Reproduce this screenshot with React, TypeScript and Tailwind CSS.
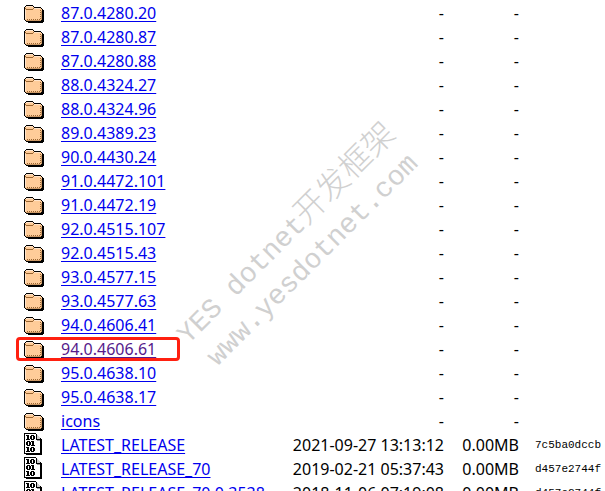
interface Entry {
  name: string
  kind: 'folder' | 'file'
  modified?: string
  size?: string
  etag?: string
  visited?: boolean
}

const folders = [
  '87.0.4280.20',
  '87.0.4280.87',
  '87.0.4280.88',
  '88.0.4324.27',
  '88.0.4324.96',
  '89.0.4389.23',
  '90.0.4430.24',
  '91.0.4472.101',
  '91.0.4472.19',
  '92.0.4515.107',
  '92.0.4515.43',
  '93.0.4577.15',
  '93.0.4577.63',
  '94.0.4606.41',
  '94.0.4606.61',
  '95.0.4638.10',
  '95.0.4638.17',
  'icons',
]

const entries: Entry[] = [
  ...folders.map((name): Entry => ({ name, kind: 'folder', visited: name === '94.0.4606.61' })),
  { name: 'LATEST_RELEASE', kind: 'file', modified: '2021-09-27 13:13:12', size: '0.00MB', etag: '7c5ba0dccb' },
  { name: 'LATEST_RELEASE_70', kind: 'file', modified: '2019-02-21 05:37:43', size: '0.00MB', etag: 'd457e2744f' },
  { name: 'LATEST_RELEASE_70.0.3538', kind: 'file', modified: '2018-11-06 07:19:08', size: '0.00MB', etag: 'd457e2744f' },
]

function FolderIcon() {
  return (
    <svg width="20" height="22" viewBox="0 0 20 22" shapeRendering="crispEdges" aria-hidden="true">
      <path fill="#000" d="M2 4h7v1h1v1h7v1h1v1h1v1h1v12h-1v1H4v-1H2v-1H1v-1H0V6h1V5h1z" />
      <path fill="#ffcc99" d="M2 5h7v1h1v1h7v1h1v11h-1v1H2v-1H1V6h1z" />
      <path fill="#ffe5cc" d="M2 5h7v1H2zM1 9h1v9H1zM10 7h6v1h-6z" />
      <path fill="#996633" d="M1 7h1v1H1zM2 8h7v1H2zM9 7h1v1H9z" />
      <path
        fill="#996633"
        d="M3 18h1v1H3zM5 18h1v1H5zM7 18h1v1H7zM9 18h1v1H9zM11 18h1v1h-1zM13 18h1v1h-1zM15 18h1v1h-1zM16 17h1v1h-1zM16 15h1v1h-1zM16 13h1v1h-1zM16 11h1v1h-1zM16 9h1v1h-1z"
      />
      <path fill="#cc9966" d="M2 19h15v1H2zM17 10h1v9h-1z" />
    </svg>
  )
}

const ZERO = 'M1 0h3v1h1v3h-1v1H1V4H0V1h1zM2 1v3h1V1z'
const ONE = 'M0 0h3v4h1v1H0V4h1V1H0z'

function BinaryIcon() {
  return (
    <svg width="20" height="22" viewBox="0 0 20 22" shapeRendering="crispEdges" aria-hidden="true">
      <path fill="#000" d="M0 0h12v1h1v1h1v1h1v1h1v1h1v1h1v16H2v-1H0z" />
      <path fill="#fff" d="M1 1h11v6h4v13H1z" />
      <path fill="#000" d="M12 1h1v6h-1zM12 6h5v1h-5z" />
      <path fill="#ccc" d="M13 2h1v1h1v1h1v2h-3z" />
      <path fill="#999" d="M13 7h3v1h-3z" />
      <g fill="#000" fillRule="evenodd">
        <path d={ONE} transform="translate(2 2)" />
        <path d={ZERO} transform="translate(6 2)" />
        <path d={ZERO} transform="translate(2 8)" />
        <path d={ONE} transform="translate(7 8)" />
        <path d={ONE} transform="translate(2 14)" />
        <path d={ZERO} transform="translate(6 14)" />
      </g>
    </svg>
  )
}

function EntryRow({ entry }: { entry: Entry }) {
  return (
    <tr className="h-6">
      <td className="relative p-0 pl-6 align-top">
        {entry.kind === 'folder' ? <FolderIcon /> : <BinaryIcon />}
        {entry.visited && (
          <span className="pointer-events-none absolute inset-y-0 left-4 w-41 rounded-sm border-3 border-[#ff2010]" />
        )}
      </td>
      <td className="p-0">
        <a
          href="#"
          className={`underline underline-offset-2 ${entry.visited ? 'text-[#551a8b]' : 'text-[#0000ee]'}`}
        >
          {entry.name}
        </a>
      </td>
      <td className="p-0 text-right">{entry.modified ?? '-'}</td>
      <td className="p-0 text-right">{entry.size ?? '-'}</td>
      <td className="p-0 pl-4 font-['Liberation_Mono',monospace] text-[11px]">{entry.etag}</td>
    </tr>
  )
}

export default function App() {
  return (
    <main className="relative h-screen overflow-hidden bg-white pt-px font-['Noto_Sans',sans-serif] text-base leading-6 text-black">
      <table className="w-full table-fixed border-collapse whitespace-nowrap">
        <colgroup>
          <col className="w-[61px]" />
          <col />
          <col className="w-[165px]" />
          <col className="w-[75px]" />
          <col className="w-[86px]" />
        </colgroup>
        <tbody>
          {entries.map(entry => (
            <EntryRow key={entry.name} entry={entry} />
          ))}
        </tbody>
      </table>
      <div className="pointer-events-none absolute inset-0 flex items-center justify-center pr-2">
        <div className="-rotate-45 text-center font-['Liberation_Mono',monospace] text-[28px] leading-9 whitespace-pre text-[#d0d0d0]">
          <p>
            YES dotnet
            <span className="font-['Noto_Sans_CJK_SC',sans-serif] text-[32px] font-light">开发框架</span>
          </p>
          <p>www.yesdotnet.com</p>
        </div>
      </div>
    </main>
  )
}
